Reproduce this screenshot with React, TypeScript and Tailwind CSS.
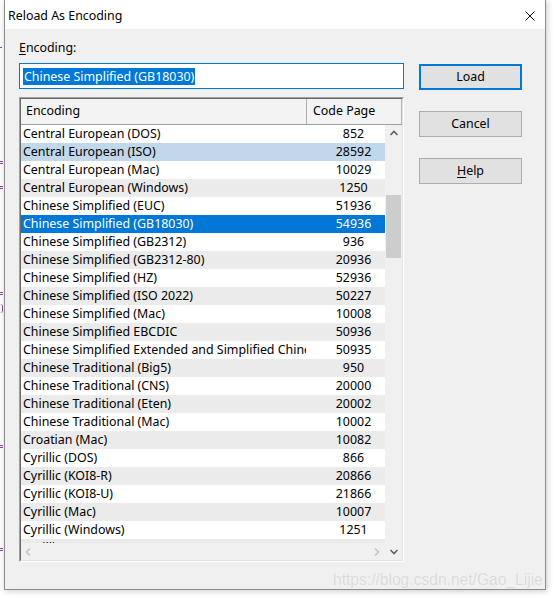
import React from "react";

const rows: [string, string][] = [
  ["Central European (DOS)", "852"],
  ["Central European (ISO)", "28592"],
  ["Central European (Mac)", "10029"],
  ["Central European (Windows)", "1250"],
  ["Chinese Simplified (EUC)", "51936"],
  ["Chinese Simplified (GB18030)", "54936"],
  ["Chinese Simplified (GB2312)", "936"],
  ["Chinese Simplified (GB2312-80)", "20936"],
  ["Chinese Simplified (HZ)", "52936"],
  ["Chinese Simplified (ISO 2022)", "50227"],
  ["Chinese Simplified (Mac)", "10008"],
  ["Chinese Simplified EBCDIC", "50936"],
  ["Chinese Simplified Extended and Simplified Chinese", "50935"],
  ["Chinese Traditional (Big5)", "950"],
  ["Chinese Traditional (CNS)", "20000"],
  ["Chinese Traditional (Eten)", "20002"],
  ["Chinese Traditional (Mac)", "10002"],
  ["Croatian (Mac)", "10082"],
  ["Cyrillic (DOS)", "866"],
  ["Cyrillic (KOI8-R)", "20866"],
  ["Cyrillic (KOI8-U)", "21866"],
  ["Cyrillic (Mac)", "10007"],
  ["Cyrillic (Windows)", "1251"],
  ["Cyrillic (ISO)", "28595"],
];

function Chevron({ dir, color }: { dir: "up" | "down" | "left" | "right"; color: string }) {
  const d = {
    up: "M1.5 6 L5 2.5 L8.5 6",
    down: "M1.5 3 L5 6.5 L8.5 3",
    left: "M6 1.5 L2.5 5 L6 8.5",
    right: "M3 1.5 L6.5 5 L3 8.5",
  }[dir];
  return (
    <svg width="10" height="10" viewBox="0 0 10 10">
      <path d={d} fill="none" stroke={color} strokeWidth="1.6" />
    </svg>
  );
}

function Button({ children, focused }: { children: React.ReactNode; focused?: boolean }) {
  return (
    <div
      className={
        "flex h-[26px] w-[103px] items-center justify-center bg-[#e1e1e1] text-[12.4px] text-black " +
        (focused ? "border-2 border-[#0078d7]" : "border border-[#adadad]")
      }
    >
      {children}
    </div>
  );
}

export default function App() {
  return (
    <div className="relative h-[598px] w-[557px] overflow-hidden bg-white font-['Noto_Sans',sans-serif] text-[12.4px] text-black">
      {/* purple marks from background */}
      <div className="absolute left-0 top-[47px] h-px w-[2px] bg-[#8a3fa0]" />
      <div className="absolute left-0 top-[161px] h-[3px] w-[3px] border-y border-[#8a3fa0]" />
      <div className="absolute left-0 top-[186px] h-[3px] w-[3px] border-y border-[#8a3fa0]" />
      <div className="absolute left-0 top-[292px] h-[3px] w-[3px] border-y border-[#8a3fa0]" />
      <div className="absolute left-0 top-[304px] h-[9px] w-[3px] rounded-r-full border-r border-[#8a3fa0]" />
      <div className="absolute left-0 top-[445px] h-[3px] w-[3px] border-y border-[#8a3fa0]" />
      <div className="absolute left-0 top-[548px] h-[3px] w-[3px] border-y border-[#8a3fa0]" />

      <div className="ml-[4px] flex h-[590px] w-[542px] flex-col border-x border-b border-[#8c8c8c] bg-[#f0f0f0] shadow-[1px_1px_6px_rgba(0,0,0,0.22)]">
        {/* title bar */}
        <div className="flex h-[29px] items-center bg-white pl-[3px] pt-[3px]">
          <span className="leading-none">Reload As Encoding</span>
          <svg className="ml-auto mr-[10px]" width="10" height="10" viewBox="0 0 10 10">
            <path d="M0.5 0.5 L9.5 9.5 M9.5 0.5 L0.5 9.5" stroke="#111" strokeWidth="1" />
          </svg>
        </div>

        {/* body */}
        <div className="flex pl-[14px] pt-[10px]">
          <div className="flex w-[385px] flex-col">
            <div className="h-[18px] leading-[18px]">
              <span className="underline underline-offset-2">E</span>ncoding:
            </div>
            <div className="mt-[6px] flex h-[26px] items-center border border-[#0078d7] bg-white pl-[3px]">
              <span className="bg-[#0078d7] px-px leading-[17px] text-white">Chinese Simplified (GB18030)</span>
            </div>

            {/* list view */}
            <div className="mt-[8px] h-[465px] border border-[#a0a0a0] border-b-white border-r-white">
              <div className="flex h-full flex-col border border-[#696969] border-b-[#e3e3e3] border-r-[#e3e3e3] bg-white">
                {/* header */}
                <div className="flex h-[26px] shrink-0 border-b border-[#a0a0a0] bg-[#f3f3f3]">
                  <div className="flex w-[286px] items-center border-r border-[#b0b0b0] pl-[5px]">Encoding</div>
                  <div className="flex w-[95px] items-center border-r border-[#b0b0b0] pl-[6px]">Code Page</div>
                </div>
                <div className="flex h-[435px]">
                  <div className="flex w-[364px] flex-col">
                    <div className="h-[418px] overflow-hidden">
                      {rows.map(([name, code], i) => {
                        const bg =
                          i === 5
                            ? "bg-[#0078d7] text-white"
                            : i === 1
                            ? "bg-[#c1d7ea]"
                            : i % 2 === 1
                            ? "bg-[#ebebeb]"
                            : "bg-white";
                        return (
                          <div key={name} className={"flex h-[18px] w-[364px] overflow-hidden leading-[18px] " + bg}>
                            <div className="w-[285px] shrink-0 overflow-hidden whitespace-nowrap pl-[2px]">{name}</div>
                            <div className="w-[95px] shrink-0 text-center">{code}</div>
                          </div>
                        );
                      })}
                    </div>
                    <div className="flex h-[17px] items-center justify-between bg-[#f0f0f0] px-[3px]">
                      <Chevron dir="left" color="#c4c4c4" />
                      <Chevron dir="right" color="#c4c4c4" />
                    </div>
                  </div>
                  <div className="flex w-[17px] flex-col bg-[#f0f0f0]">
                    <div className="flex h-[17px] items-center justify-center">
                      <Chevron dir="up" color="#606060" />
                    </div>
                    <div className="mx-px mt-[53px] h-[63px] bg-[#cdcdcd]" />
                    <div className="flex-1" />
                    <div className="flex h-[17px] items-center justify-center">
                      <Chevron dir="down" color="#606060" />
                    </div>
                  </div>
                </div>
              </div>
            </div>
          </div>

          <div className="ml-[15px] flex flex-col gap-[21px] pt-[25px]">
            <Button focused>Load</Button>
            <Button>Cancel</Button>
            <Button>
              <span>
                <span className="underline underline-offset-2">H</span>elp
              </span>
            </Button>
          </div>
        </div>
      </div>

      <div className="absolute left-[333px] top-[571px] whitespace-nowrap font-['Liberation_Sans',sans-serif] text-[15.6px] leading-[18px] text-[#dadada] [text-shadow:0_0_1px_#ffffff]">
        https://blog.csdn.net/Gao_Lijie
      </div>
    </div>
  );
}
